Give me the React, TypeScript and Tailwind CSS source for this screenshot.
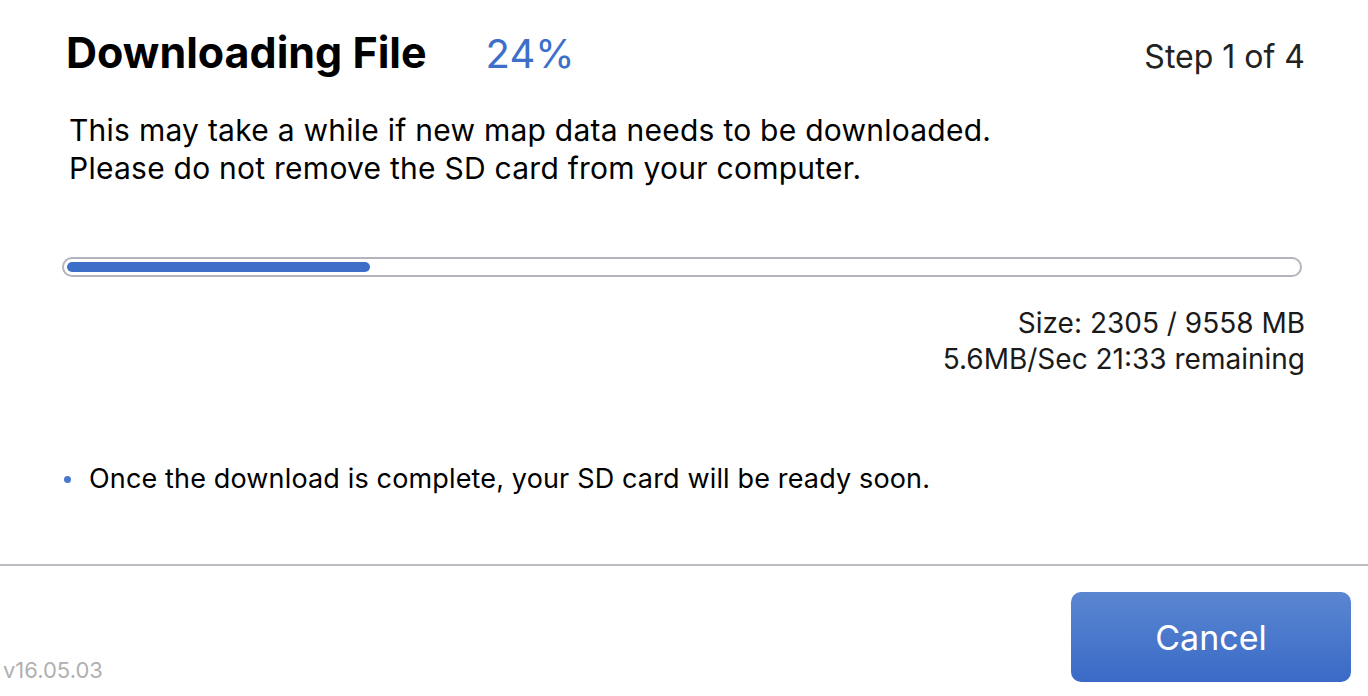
import React from 'react';

const progress = 24;
const barFill = 24.6;

export default function App() {
  return (
    <div className="w-[1368px] h-[696px] bg-white flex flex-col font-['Inter','Liberation_Sans',sans-serif] overflow-hidden">
      {/* Main content */}
      <div className="h-[564px] flex flex-col px-[62px]">
        <div className="flex items-baseline pt-[28px] pl-[4px] pr-[1px] leading-[48px]">
          <h1 className="text-[43px] font-bold text-black">Downloading File</h1>
          <span className="ml-[59px] text-[40px] text-[#3d6fc8]">{progress}%</span>
          <span className="ml-auto text-[32px] text-[#222]">Step 1 of 4</span>
        </div>

        <p className="mt-[30px] pl-[7px] text-[30px] leading-[38px] tracking-[0.25px] text-black">
          This may take a while if new map data needs to be downloaded.
          <br />
          Please do not remove the SD card from your computer.
        </p>

        <div className="mt-[70px] h-[20px] w-[1240px] rounded-full border-2 border-[#b4b4be] p-[3px]">
          <div className="h-full rounded-full bg-[#3d6fc8]" style={{ width: `${barFill}%` }} />
        </div>

        <div className="mt-[28px] pr-[1px] text-right text-[28px] leading-[36px] text-[#1a1a1a]">
          <div>Size: 2305 / 9558 MB</div>
          <div>5.6MB/Sec 21:33 remaining</div>
        </div>

        <div className="mt-[84px] flex items-center pl-[2px] leading-[36px]">
          <span className="w-[7px] h-[7px] rounded-full bg-[#4a78cc]" />
          <span className="ml-[18px] text-[27px] tracking-[0.15px] text-black">
            Once the download is complete, your SD card will be ready soon.
          </span>
        </div>
      </div>

      <div className="h-[2px] bg-[#bdbdc4]" />

      {/* Footer */}
      <div className="flex-1 flex items-start justify-between">
        <span className="self-end mb-[9px] ml-[3px] text-[22px] text-[#b0b0b0]">v16.05.03</span>
        <button className="mt-[26px] mr-[17px] w-[280px] h-[90px] rounded-[10px] bg-gradient-to-b from-[#5a86d1] to-[#3a6ac6] text-white text-[34px]">
          Cancel
        </button>
      </div>
    </div>
  );
}
